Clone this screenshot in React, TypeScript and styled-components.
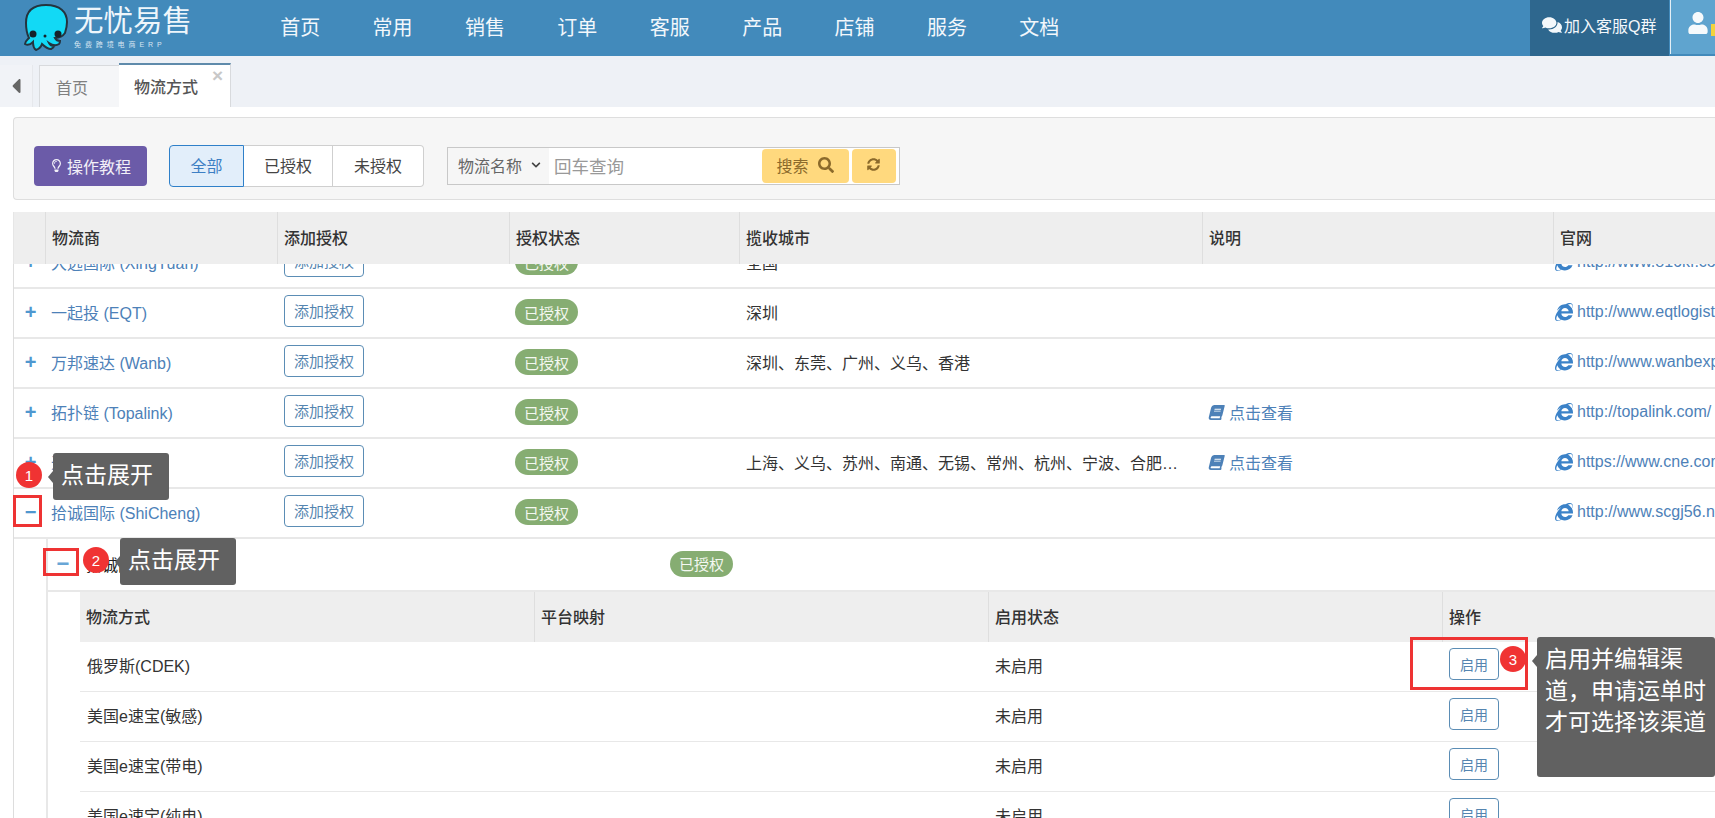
import styled, { createGlobalStyle } from 'styled-components';
import {
    FaBook,
    FaCaretLeft,
    FaChevronDown,
    FaComments,
    FaInternetExplorer,
    FaRegLightbulb,
    FaSearch,
    FaSyncAlt,
    FaUser,
} from 'react-icons/fa';

const FONT = '"Liberation Sans", "Noto Sans CJK SC", sans-serif';
const LINK = '#4d81b8';
const LINE = '#e8e8e8';

const GlobalStyle = createGlobalStyle`
    html, body {
        margin: 0;
        height: 100%;
        overflow: hidden;
        background: #fff;
    }
    body {
        font-family: ${FONT};
        font-size: 16px;
        color: #333;
    }
    * {
        box-sizing: border-box;
    }
`;

const Page = styled.div`
    position: relative;
    width: 1715px;
    height: 818px;
    overflow: hidden;
`;

const Navbar = styled.header`
    display: flex;
    height: 56px;
    background: #428abb;
`;

const Brand = styled.div`
    display: flex;
    width: 254px;
    padding: 3px 0 0 23px;
    gap: 5px;
`;

const BrandText = styled.div`
    display: flex;
    flex-direction: column;
    color: #eef6fb;
`;

const BrandName = styled.span`
    font-size: 29.5px;
    line-height: 36px;
    height: 37px;
    white-space: nowrap;
`;

const BrandSub = styled.span`
    font-size: 7px;
    line-height: 9px;
    letter-spacing: 3.9px;
    white-space: nowrap;
    opacity: 0.85;
`;

const NavItem = styled.a`
    width: 92.4px;
    text-align: center;
    font-size: 20px;
    line-height: 56px;
    color: #f2f7fb;
`;

const NavRight = styled.div`
    display: flex;
    margin-left: auto;
`;

const QqGroup = styled.div`
    display: flex;
    align-items: center;
    gap: 2px;
    width: 139px;
    height: 56px;
    padding: 0 0 6px 12px;
    background: #2e678e;
    color: #f4f8fb;
    font-size: 16px;
    white-space: nowrap;
`;

const UserBox = styled.div`
    position: relative;
    width: 45px;
    height: 54px;
    margin-left: 1px;
    padding: 12px 0 0 16px;
    background: #5fa4cf;
    border-left: 1px solid #e4eff6;
    color: #f6fafc;
    font-size: 22px;
    overflow: hidden;
`;

const UserBadge = styled.span`
    position: absolute;
    left: 40px;
    top: 24px;
    width: 6px;
    height: 12px;
    background: #f3d23c;
`;

const TabBar = styled.div`
    display: flex;
    align-items: flex-end;
    height: 51px;
    background: #eef1f6;
`;

const TabToggle = styled.div`
    display: flex;
    align-items: center;
    justify-content: center;
    width: 33px;
    height: 42px;
    margin-right: 6px;
    background: #f1f3f7;
    border-right: 1px solid #e6e8ec;
    color: #666;
    font-size: 24px;
`;

const Tab = styled.div<{ $active?: boolean }>`
    position: relative;
    display: flex;
    align-items: center;
    height: ${(p) => (p.$active ? '44px' : '42px')};
    width: ${(p) => (p.$active ? '112px' : '80px')};
    padding-left: ${(p) => (p.$active ? '15px' : '16px')};
    background: ${(p) => (p.$active ? '#fff' : '#f5f6f8')};
    border: 1px solid #d8dadd;
    border-width: ${(p) => (p.$active ? '2px 1px 0 0' : '1px 0 0 1px')};
    border-top-color: ${(p) => (p.$active ? '#5f8bab' : '#d8dadd')};
    color: ${(p) => (p.$active ? '#555' : '#808080')};
    font-size: 16px;
    font-weight: ${(p) => (p.$active ? 500 : 400)};
`;

const TabClose = styled.span`
    position: absolute;
    top: 2px;
    right: 7px;
    color: #c8c8c8;
    font-size: 19px;
    line-height: 17px;
    font-weight: 700;
`;

const Content = styled.main`
    padding: 10px 0 0 13px;
`;

const FilterPanel = styled.section`
    display: flex;
    align-items: center;
    height: 83px;
    padding: 15px 0 0 20px;
    background: #f6f6f6;
    border: 1px solid #dedede;
    border-right: 0;
    border-radius: 4px 0 0 4px;
`;

const GuideButton = styled.button`
    display: flex;
    align-items: center;
    justify-content: center;
    gap: 4px;
    width: 113px;
    height: 40px;
    padding: 0 0 1px;
    background: #6b5ba8;
    border: 0;
    border-radius: 4px;
    color: #f2f0f8;
    font-family: ${FONT};
    font-size: 16px;
`;

const FilterGroup = styled.div`
    display: flex;
    height: 42px;
    margin-left: 22px;
    background: #fff;
    border-radius: 4px;
`;

const FilterButton = styled.div<{ $active?: boolean; $width: number }>`
    display: flex;
    align-items: center;
    justify-content: center;
    width: ${(p) => p.$width}px;
    padding-bottom: 2px;
    background: ${(p) => (p.$active ? '#e2eefa' : 'transparent')};
    border: 1px solid ${(p) => (p.$active ? '#2f80c9' : '#cfcfcf')};
    border-left-width: ${(p) => (p.$active ? '1px' : '0')};
    border-radius: ${(p) => (p.$active ? '4px 0 0 4px' : '0')};
    color: ${(p) => (p.$active ? '#3d7fc4' : '#444')};
    font-size: 16px;

    &:last-child {
        border-radius: 0 4px 4px 0;
    }
`;

const SearchBar = styled.div`
    display: flex;
    align-items: center;
    width: 453px;
    height: 38px;
    margin-left: 23px;
    background: #fff;
    border: 1px solid #c8c8c8;
`;

const SearchField = styled.div`
    display: flex;
    align-items: center;
    gap: 9px;
    width: 102px;
    height: 36px;
    padding: 0 0 2px 10px;
    background: #f6f6f6;
    color: #666;
    font-size: 16px;
    white-space: nowrap;

    svg {
        color: #444;
    }
`;

const SearchPlaceholder = styled.div`
    width: 215px;
    padding: 0 0 2px 5px;
    color: #999;
    font-size: 17.5px;
`;

const YellowButton = styled.div<{ $width: number }>`
    display: flex;
    align-items: center;
    justify-content: center;
    gap: 9px;
    width: ${(p) => p.$width}px;
    height: 34px;
    margin-right: 3px;
    padding-bottom: 3px;
    background: #ffd97e;
    border-radius: 4px;
    color: #8b6a2b;
    font-size: 16px;
`;

const HEAD_COLS = '31px 232px 232px 230px 463px 351px 300px';

const GridHead = styled.div`
    display: grid;
    grid-template-columns: ${HEAD_COLS};
    height: 52px;
    margin-top: 12px;
    background: #eee;
    border-left: 1px solid #e6e6e6;
`;

const HeadCell = styled.div`
    display: flex;
    align-items: center;
    padding: 0 0 2px 6px;
    border-left: 1px solid #dedede;
    color: #333;
    font-size: 16px;
    font-weight: 500;
    white-space: nowrap;

    &:first-child {
        border-left: 0;
    }
`;

const Body = styled.div`
    height: 554px;
    overflow: hidden;
    border-left: 1px solid #ddd;
`;

const BodyInner = styled.div`
    margin-top: -25px;
`;

const Row = styled.div`
    display: grid;
    grid-template-columns: ${HEAD_COLS};
    align-items: center;
    height: 50px;
    padding-bottom: 2px;
    border-bottom: 2px solid ${LINE};
`;

const Toggle = styled.span`
    width: 30px;
    padding-left: 3px;
    text-align: center;
    color: #4f97cf;
    font-size: 20px;
    font-weight: 700;
    line-height: 20px;
`;

const NameLink = styled.a`
    padding-left: 6px;
    color: ${LINK};
    font-size: 16px;
    white-space: nowrap;
`;

const OutlineButton = styled.span<{ $width: number }>`
    display: inline-flex;
    align-items: center;
    justify-content: center;
    width: ${(p) => p.$width}px;
    height: 32px;
    background: #fff;
    border: 1px solid #5b8db5;
    border-radius: 4px;
    color: #5585b0;
    font-size: ${(p) => (p.$width > 60 ? '15px' : '14px')};
`;

const ActionCell = styled.div`
    display: flex;
    padding-left: 7px;
    margin-top: -3px;
`;

const BadgeCell = styled.div`
    padding-left: 6px;
`;

const Badge = styled.span`
    display: inline-flex;
    align-items: center;
    justify-content: center;
    width: 63px;
    height: 26px;
    background: #86ad72;
    border-radius: 13px;
    color: #f4f8f1;
    font-size: 15px;
`;

const TextCell = styled.div`
    padding: 0 12px 0 7px;
    color: #333;
    font-size: 16px;
    white-space: nowrap;
    overflow: hidden;
    text-overflow: ellipsis;
`;

const DocLink = styled.a`
    display: flex;
    align-items: center;
    gap: 5px;
    padding-left: 7px;
    color: ${LINK};
    font-size: 16px;
`;

const BookIcon = styled(FaBook)`
    font-size: 15px;
    transform: skewX(-14deg);
`;

const UrlLink = styled.a`
    display: flex;
    align-items: center;
    gap: 4px;
    padding-left: 2px;
    color: ${LINK};
    font-size: 16px;
    white-space: nowrap;
`;

const UrlIcon = styled(FaInternetExplorer)`
    flex: none;
    color: #3b82c8;
    font-size: 18px;
`;

const Nested = styled.div`
    margin-left: 32px;
    border-left: 2px solid ${LINE};
`;

const SubRow = styled.div`
    display: grid;
    grid-template-columns: 38px 584px 100px;
    align-items: center;
    height: 53px;
    padding-bottom: 2px;
    border-bottom: 2px solid ${LINE};
`;

const SubToggle = styled.span`
    padding-right: 8px;
    text-align: center;
    color: #68a6d6;
    font-size: 22px;
    font-weight: 700;
    line-height: 20px;
`;

const SubName = styled.span`
    color: #222;
    font-size: 16px;
`;

const InnerHead = styled.div`
    display: grid;
    grid-template-columns: repeat(3, 454px) 300px;
    height: 50px;
    margin-left: 32px;
    background: #eee;
`;

const InnerHeadCell = styled.div`
    display: flex;
    align-items: center;
    padding: 0 0 2px 6px;
    border-left: 1px solid #dedede;
    color: #333;
    font-size: 16px;
    font-weight: 500;

    &:first-child {
        border-left: 0;
    }
`;

const InnerRow = styled.div`
    display: grid;
    grid-template-columns: repeat(3, 454px) 300px;
    align-items: center;
    height: 50px;
    margin-left: 32px;
    padding-bottom: 4px;
    border-bottom: 1px solid ${LINE};
`;

const InnerCell = styled.div`
    padding-left: 7px;
    color: #333;
    font-size: 16px;
`;

const EnableCell = styled(InnerCell)`
    margin-top: -2px;
`;

/* 标注层: 叠在表格上方 */
const RedBox = styled.div<{ $x: number; $y: number; $w: number; $h: number }>`
    position: absolute;
    left: ${(p) => p.$x}px;
    top: ${(p) => p.$y}px;
    width: ${(p) => p.$w}px;
    height: ${(p) => p.$h}px;
    border: 3px solid #ee3333;
`;

const Step = styled.div<{ $x: number; $y: number }>`
    position: absolute;
    left: ${(p) => p.$x}px;
    top: ${(p) => p.$y}px;
    display: flex;
    align-items: center;
    justify-content: center;
    width: 26px;
    height: 26px;
    background: #f03333;
    border-radius: 50%;
    color: #fff;
    font-size: 15px;
`;

const Hint = styled.div<{ $x: number; $y: number; $w: number; $h: number }>`
    position: absolute;
    left: ${(p) => p.$x}px;
    top: ${(p) => p.$y}px;
    width: ${(p) => p.$w}px;
    height: ${(p) => p.$h}px;
    padding: 7px 8px;
    background: #616161;
    border-radius: 3px;
    color: #fff;
    font-size: 23px;
    line-height: 31.5px;

    &::before {
        content: '';
        position: absolute;
        left: -5px;
        top: 18px;
        border-style: solid;
        border-width: 6px 5px 6px 0;
        border-color: transparent #616161 transparent transparent;
    }
`;

const Octopus = () => (
    <svg width="46" height="50" viewBox="0 0 46 50">
        <path
            d="M23 2C9 2 3 9 3 20c0 6 1 11 3 15-2 2-4 3-4 6 3 2 6 0 8-2 0 3 0 6 3 8 3-1 5-3 6-6 2 2 5 5 9 5 2-1 3-2 3-3-2 0-4-1-5-3 3 2 7 3 10 1 1-1 1-2 1-3-2 0-4-1-5-3 4 0 8-2 10-5 1-3 2-7 2-11C44 9 37 2 23 2z"
            fill="#12d9f5"
            stroke="#24343f"
            strokeWidth="2"
        />
        <circle cx="10" cy="31" r="3.5" fill="#15222b" />
        <circle cx="35" cy="31" r="3.5" fill="#15222b" />
        <circle cx="22" cy="33" r="1.5" fill="#15222b" />
    </svg>
);

const CARRIERS = [
    { name: '大远国际 (XingYuan)', city: '全国', url: 'http://www.816kf.com' },
    { name: '一起投 (EQT)', city: '深圳', url: 'http://www.eqtlogistics.com' },
    { name: '万邦速达 (Wanb)', city: '深圳、东莞、广州、义乌、香港', url: 'http://www.wanbexpress.com' },
    { name: '拓扑链 (Topalink)', doc: true, url: 'http://topalink.com/' },
    {
        name: '递一 (CNE)',
        city: '上海、义乌、苏州、南通、无锡、常州、杭州、宁波、合肥、南京、青岛',
        doc: true,
        url: 'https://www.cne.com',
    },
    { name: '拾诚国际 (ShiCheng)', url: 'http://www.scgj56.net', open: true },
];

const CHANNELS = ['俄罗斯(CDEK)', '美国e速宝(敏感)', '美国e速宝(带电)', '美国e速宝(纯电)'];

const NAV = ['首页', '常用', '销售', '订单', '客服', '产品', '店铺', '服务', '文档'];

export default function App() {
    return (
        <Page>
            <GlobalStyle />
            <Navbar>
                <Brand>
                    <Octopus />
                    <BrandText>
                        <BrandName>无忧易售</BrandName>
                        <BrandSub>免费跨境电商ERP</BrandSub>
                    </BrandText>
                </Brand>
                {NAV.map((item) => (
                    <NavItem key={item}>{item}</NavItem>
                ))}
                <NavRight>
                    <QqGroup>
                        <FaComments size={20} />
                        加入客服Q群
                    </QqGroup>
                    <UserBox>
                        <FaUser />
                        <UserBadge />
                    </UserBox>
                </NavRight>
            </Navbar>

            <TabBar>
                <TabToggle>
                    <FaCaretLeft />
                </TabToggle>
                <Tab>首页</Tab>
                <Tab $active>
                    物流方式
                    <TabClose>×</TabClose>
                </Tab>
            </TabBar>

            <Content>
                <FilterPanel>
                    <GuideButton>
                        <FaRegLightbulb size={13} />
                        操作教程
                    </GuideButton>
                    <FilterGroup>
                        <FilterButton $active $width={75}>全部</FilterButton>
                        <FilterButton $width={89}>已授权</FilterButton>
                        <FilterButton $width={91}>未授权</FilterButton>
                    </FilterGroup>
                    <SearchBar>
                        <SearchField>
                            物流名称
                            <FaChevronDown size={10} />
                        </SearchField>
                        <SearchPlaceholder>回车查询</SearchPlaceholder>
                        <YellowButton $width={88}>
                            搜索
                            <FaSearch size={16} />
                        </YellowButton>
                        <YellowButton $width={45}>
                            <FaSyncAlt size={13} />
                        </YellowButton>
                    </SearchBar>
                </FilterPanel>

                <GridHead>
                    <HeadCell />
                    <HeadCell>物流商</HeadCell>
                    <HeadCell>添加授权</HeadCell>
                    <HeadCell>授权状态</HeadCell>
                    <HeadCell>揽收城市</HeadCell>
                    <HeadCell>说明</HeadCell>
                    <HeadCell>官网</HeadCell>
                </GridHead>

                <Body>
                    <BodyInner>
                        {CARRIERS.map((c) => (
                            <Row key={c.name}>
                                <Toggle>{c.open ? '−' : '+'}</Toggle>
                                <NameLink>{c.name}</NameLink>
                                <ActionCell>
                                    <OutlineButton $width={80}>添加授权</OutlineButton>
                                </ActionCell>
                                <BadgeCell>
                                    <Badge>已授权</Badge>
                                </BadgeCell>
                                <TextCell>{c.city}</TextCell>
                                {c.doc ? (
                                    <DocLink>
                                        <BookIcon />
                                        点击查看
                                    </DocLink>
                                ) : (
                                    <span />
                                )}
                                <UrlLink>
                                    <UrlIcon />
                                    {c.url}
                                </UrlLink>
                            </Row>
                        ))}
                        <Nested>
                            <SubRow>
                                <SubToggle>−</SubToggle>
                                <SubName>拾诚国际</SubName>
                                <Badge>已授权</Badge>
                            </SubRow>
                            <InnerHead>
                                <InnerHeadCell>物流方式</InnerHeadCell>
                                <InnerHeadCell>平台映射</InnerHeadCell>
                                <InnerHeadCell>启用状态</InnerHeadCell>
                                <InnerHeadCell>操作</InnerHeadCell>
                            </InnerHead>
                            {CHANNELS.map((name) => (
                                <InnerRow key={name}>
                                    <InnerCell>{name}</InnerCell>
                                    <InnerCell />
                                    <InnerCell>未启用</InnerCell>
                                    <EnableCell>
                                        <OutlineButton $width={50}>启用</OutlineButton>
                                    </EnableCell>
                                </InnerRow>
                            ))}
                        </Nested>
                    </BodyInner>
                </Body>
            </Content>

            <Hint $x={53} $y={453} $w={116} $h={47}>点击展开</Hint>
            <Step $x={16} $y={462}>1</Step>
            <RedBox $x={13} $y={495} $w={29} $h={32} />

            <RedBox $x={43} $y={548} $w={36} $h={28} />
            <Step $x={83} $y={547}>2</Step>
            <Hint $x={120} $y={538} $w={116} $h={47}>点击展开</Hint>

            <RedBox $x={1410} $y={637} $w={118} $h={53} />
            <Step $x={1500} $y={646}>3</Step>
            <Hint $x={1537} $y={637} $w={178} $h={140}>
                启用并编辑渠道，申请运单时才可选择该渠道
            </Hint>
        </Page>
    );
}
